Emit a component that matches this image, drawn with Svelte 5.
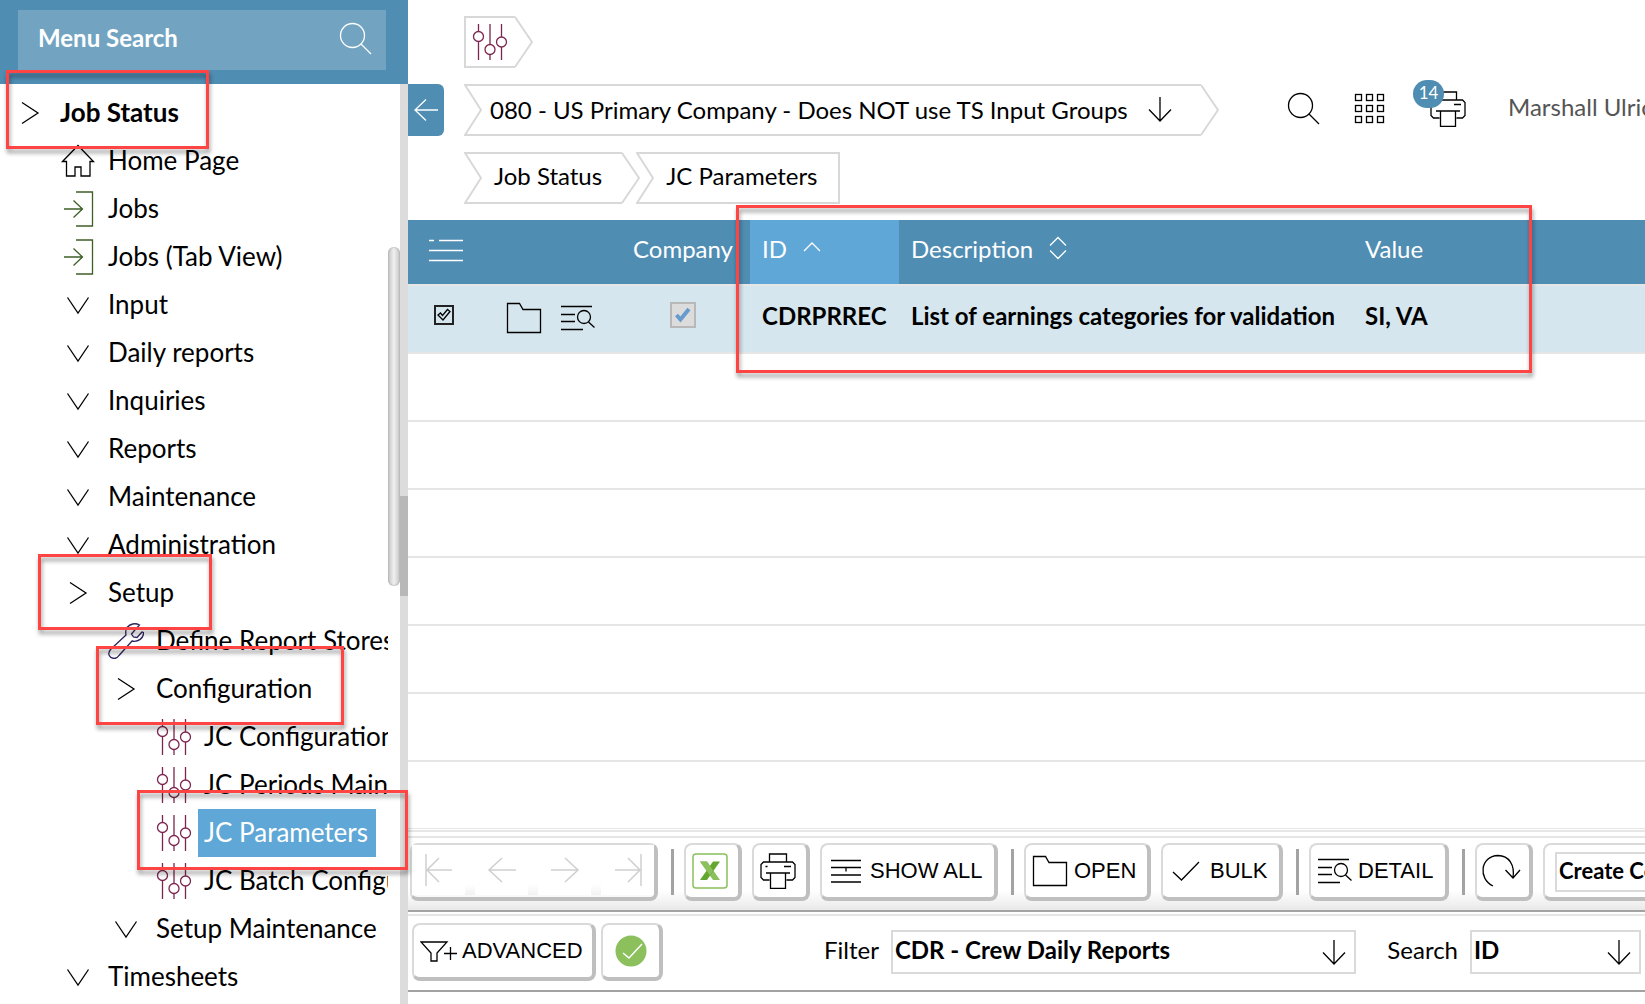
<script>
  const menu = [
    { label: 'Job Status', level: 0, icon: 'right', bold: true },
    { label: 'Home Page', level: 1, icon: 'home' },
    { label: 'Jobs', level: 1, icon: 'enter' },
    { label: 'Jobs (Tab View)', level: 1, icon: 'enter' },
    { label: 'Input', level: 1, icon: 'down' },
    { label: 'Daily reports', level: 1, icon: 'down' },
    { label: 'Inquiries', level: 1, icon: 'down' },
    { label: 'Reports', level: 1, icon: 'down' },
    { label: 'Maintenance', level: 1, icon: 'down' },
    { label: 'Administration', level: 1, icon: 'down' },
    { label: 'Setup', level: 1, icon: 'right' },
    { label: 'Define Report Stores', level: 2, icon: 'wrench' },
    { label: 'Configuration', level: 2, icon: 'right' },
    { label: 'JC Configuration', level: 3, icon: 'sliders' },
    { label: 'JC Periods Maintenance', level: 3, icon: 'sliders' },
    { label: 'JC Parameters', level: 3, icon: 'sliders', active: true },
    { label: 'JC Batch Configuration', level: 3, icon: 'sliders' },
    { label: 'Setup Maintenance', level: 2, icon: 'down' },
    { label: 'Timesheets', level: 1, icon: 'down' },
  ];
  const emptyRows = [1, 2, 3, 4, 5, 6, 7];
  const gridCells = [0, 1, 2, 3, 4, 5, 6, 7, 8];
</script>

{#snippet icon(name)}
  {#if name === 'right'}
    <svg class="ico" width="36" height="36" viewBox="0 0 36 36"><path d="M10 7.500L26 18L10 28.500" /></svg>
  {:else if name === 'down'}
    <svg class="ico" width="36" height="36" viewBox="0 0 36 36"><path d="M7.500 10.500L18 26L28.500 10.500" /></svg>
  {:else if name === 'home'}
    <svg class="ico" width="36" height="36" viewBox="0 0 36 36"><path d="M2.500 18.500L18 2.500L33.500 18.500H30V33H21V24H15V33H6.500V18.500Z" /></svg>
  {:else if name === 'enter'}
    <svg class="ico green" width="36" height="36" viewBox="0 0 36 36"><path d="M16 1H32.500V35H16M4 18H22.500M13.500 9.500L22.500 18L13.500 26.500" /></svg>
  {:else if name === 'wrench'}
    <svg class="ico indigo" width="36" height="36" viewBox="0 0 36 36"><path d="M31.500 2C27 -0.500 22 1 19 4.500C17.500 6.500 17.500 9 18 12L2.500 26.500C-1 31 1.500 35 6 35.500C8.500 35.500 10 34 11 32.500L24 18C30 19.500 36 15 35.500 9.500L34 9L29 14.500L25.500 14L23.500 11L26 8Z" /></svg>
  {:else if name === 'sliders'}
    <svg class="ico plum" width="36" height="36" viewBox="0 0 36 36"><path d="M6.500 0V7.500M6.500 17.500V36M18 0V20.500M18 30.500V36M29.500 0V13M29.500 23V36" /><circle cx="6.500" cy="12.500" r="5" /><circle cx="18" cy="25.500" r="5" /><circle cx="29.500" cy="18" r="5" /></svg>
  {:else if name === 'folder'}
    <svg class="ico" width="36" height="36" viewBox="0 0 36 36"><path d="M1.500 3.500H13.500L17 9.500H34.500V32.500H1.500Z" /></svg>
  {:else if name === 'detail'}
    <svg class="ico" width="36" height="36" viewBox="0 0 36 36"><path d="M1 6.500H32M1 14.500H15M1 21.500H15M1 29.500H23M28.500 22L34.500 27.500" /><circle cx="24" cy="17" r="6.500" /></svg>
  {:else if name === 'search'}
    <svg class="ico" width="36" height="36" viewBox="0 0 36 36"><circle cx="14.500" cy="14.500" r="12" /><path d="M23 23L33 33" /></svg>
  {:else if name === 'printer'}
    <svg class="ico" width="36" height="36" viewBox="0 0 36 36"><path d="M9.500 9V1H26.500V9M9.500 27H3.500L1 24.500V11.500L3.500 9H32.500L35 11.500V24.500L32.500 27H26.500M6 20H30M10.500 20V35.500H25.500V20M24 13.500H31M5.500 13.500H7.500" /></svg>
  {:else if name === 'arrow'}
    <svg class="ico" width="28" height="28" viewBox="0 0 28 28"><path d="M14 2V26M3 14.500L14 26L25 14.500" /></svg>
  {/if}
{/snippet}

{#snippet notch()}
  <svg class="cap" width="18" height="52" viewBox="0 0 18 52"><path d="M18 1H1L17 26L1 51H18" /></svg>
{/snippet}

{#snippet point()}
  <svg class="cap" width="18" height="52" viewBox="0 0 18 52"><path d="M0 1L17 26L0 51" /></svg>
{/snippet}

<div class="app">
  <aside class="side">
    <div class="side-head">
      <div class="menu-search">
        <input type="text" placeholder="Menu Search" aria-label="Menu Search" />
        <button aria-label="Search menu">{@render icon('search')}</button>
      </div>
    </div>
    <div class="side-body">
      <nav class="tree">
        <ul>
          {#each menu as item}
            <li class="level{item.level}">
              <span class="slot">{@render icon(item.icon)}</span>
              <a href="#menu" class:bold={item.bold} class:active={item.active}>{item.label}</a>
            </li>
          {/each}
        </ul>
      </nav>
      <div class="inner-bar"><span></span></div>
      <div class="outer-bar"><span></span></div>
    </div>
  </aside>

  <main class="main">
    <header class="top">
      <div class="crumbs">
        <div class="crumb home-crumb">
          <span class="crumb-body">{@render icon('sliders')}</span>
          {@render point()}
        </div>
      </div>
      <div class="company-row">
        <button class="collapse" aria-label="Collapse menu">
          <svg class="ico" width="28" height="28" viewBox="0 0 28 28"><path d="M26 14H3M14 3.500L3 14L14 24.500" /></svg>
        </button>
        <div class="crumb company">
          {@render notch()}
          <div class="crumb-body">
            <select aria-label="Company"><option>080 - US Primary Company - Does NOT use TS Input Groups</option></select>
            {@render icon('arrow')}
          </div>
          {@render point()}
        </div>
        <div class="tools">
          <button aria-label="Search">{@render icon('search')}</button>
          <button aria-label="Applications">
            <svg class="ico grid" width="32" height="32" viewBox="0 0 32 32">
              {#each gridCells as n}
                <rect x={1.5 + (n % 3) * 11} y={1.5 + Math.floor(n / 3) * 11} width="6" height="6" />
              {/each}
            </svg>
          </button>
          <button class="queue" aria-label="Print queue">{@render icon('printer')}<span class="badge">14</span></button>
          <span class="user">Marshall Ulrich</span>
        </div>
      </div>
      <div class="crumbs">
        <div class="crumb trail">
          {@render notch()}
          <a class="crumb-body" href="#status">Job Status</a>
          {@render point()}
        </div>
        <div class="crumb trail last">
          {@render notch()}
          <a class="crumb-body" href="#parameters">JC Parameters</a>
        </div>
      </div>
    </header>

    <table>
      <colgroup><col class="c-check" /><col class="c-act" /><col class="c-comp" /><col class="c-id" /><col class="c-desc" /><col /></colgroup>
      <thead>
        <tr>
          <th class="mid"><button class="columns" aria-label="Columns"><svg class="ico" width="34" height="24" viewBox="0 0 34 24"><path d="M0 1.500H5M10 1.500H34M0 11.500H34M0 21.500H34" /></svg></button></th>
          <th></th>
          <th class="mid">Company</th>
          <th class="sorted"><button>ID <svg class="ico" width="18" height="24" viewBox="0 0 18 24"><path d="M1 15L9 7L17 15" /></svg></button></th>
          <th><button>Description <svg class="ico" width="18" height="24" viewBox="0 0 18 24"><path d="M1 9.500L9 1.500L17 9.500M1 14.500L9 22.500L17 14.500" /></svg></button></th>
          <th>Value</th>
        </tr>
      </thead>
      <tbody>
        <tr class="chosen">
          <td class="mid"><label class="pick"><input type="checkbox" checked aria-label="Select row" /><svg class="ico" width="14" height="14" viewBox="0 0 14 14"><path d="M1 7L3.500 5L5.500 7.500L10.500 1.500L13 3.500L6 12Z" /></svg></label></td>
          <td><div class="acts"><button aria-label="Open record">{@render icon('folder')}</button><button aria-label="Record detail">{@render icon('detail')}</button></div></td>
          <td class="mid"><label class="flag"><input type="checkbox" checked disabled aria-label="Company level" /><svg width="16" height="16" viewBox="0 0 16 16"><path d="M1.500 8L5.500 12.500L14 2" /></svg></label></td>
          <td>CDRPRREC</td>
          <td>List of earnings categories for validation</td>
          <td>SI, VA</td>
        </tr>
        {#each emptyRows as row}
          <tr class="empty"><td colspan="6"></td></tr>
        {/each}
      </tbody>
    </table>

    <div class="bar actions">
      <div class="btn pager">
        <button aria-label="First"><svg width="30" height="34" viewBox="0 0 30 34"><path d="M2 1V33M28 17H3M15 5L3 17L15 29" /></svg></button>
        <button aria-label="Previous"><svg width="30" height="34" viewBox="0 0 30 34"><path d="M29 17H2M15 5L2 17L15 29" /></svg></button>
        <button aria-label="Next"><svg width="30" height="34" viewBox="0 0 30 34"><path d="M1 17H28M15 5L28 17L15 29" /></svg></button>
        <button aria-label="Last"><svg width="30" height="34" viewBox="0 0 30 34"><path d="M28 1V33M2 17H27M15 5L27 17L15 29" /></svg></button>
      </div>
      <i class="rule"></i>
      <button class="btn square" aria-label="Export to Excel">
        <svg width="36" height="36" viewBox="0 0 36 36"><rect x="1" y="1" width="34" height="34" rx="3" fill="none" stroke="#8bc05c" stroke-width="1.500" /><path d="M8 8.500H15L28 27H21Z" fill="#8bc05c" /><path d="M21 8.500H28L15 27H8Z" fill="#62a830" /><path d="M8 8.500H15L21 17.500L18 22.500Z" fill="#8bc05c" /></svg>
      </button>
      <button class="btn square" aria-label="Print">{@render icon('printer')}</button>
      <button class="btn show"><svg class="ico" width="32" height="28" viewBox="0 0 32 28"><path d="M1 3.500H31M1 10.500H31M1 18H31M1 25H31M16 11V14.500" /></svg>SHOW ALL</button>
      <i class="rule"></i>
      <button class="btn open">{@render icon('folder')}OPEN</button>
      <button class="btn bulk"><svg class="ico" width="28" height="24" viewBox="0 0 28 24"><path d="M1 13L9.500 21L27 3" /></svg>BULK</button>
      <i class="rule"></i>
      <button class="btn more">{@render icon('detail')}DETAIL</button>
      <i class="rule"></i>
      <button class="btn square" aria-label="Refresh"><svg class="ico" width="40" height="36" viewBox="0 0 40 36"><path d="M12 33C-3 26 -1 3 17 2.500C28 2.500 34 12 32 25M24.500 17L32 25L39 17" /></svg></button>
      <div class="btn create"><select aria-label="Action"><option>Create Copy</option></select></div>
    </div>

    <div class="bar filters">
      <button class="btn advanced"><svg class="ico" width="38" height="24" viewBox="0 0 38 24"><path d="M1 3H27L17 14V22H11V14ZM24 14.500H37M30.500 8V21" /></svg>ADVANCED</button>
      <button class="btn apply" aria-label="Apply"><svg width="32" height="32" viewBox="0 0 32 32"><circle cx="16" cy="16" r="15.500" fill="#8bc05c" /><path d="M8 18L14 23L27 9" fill="none" stroke="#fff" stroke-width="1.500" /></svg></button>
      <label class="field filter"><span>Filter</span><span class="box"><select><option>CDR - Crew Daily Reports</option></select>{@render icon('arrow')}</span></label>
      <label class="field find"><span>Search</span><span class="box"><select><option>ID</option></select>{@render icon('arrow')}</span></label>
    </div>
  </main>

  <div class="mark mark-status"></div>
  <div class="mark mark-setup"></div>
  <div class="mark mark-config"></div>
  <div class="mark mark-params"></div>
  <div class="mark mark-record"></div>
</div>

<style>
  :global(body) { background: #fff; overflow: hidden; }
  .app {
    position: relative;
    display: grid;
    grid-template-columns: 408px minmax(0, 1fr);
    min-height: 100vh;
    overflow: hidden;
    font-family: Lato, "Liberation Sans", sans-serif;
    font-size: 24px;
    color: #000;
  }
  .app * { box-sizing: border-box; }
  button, select, input { font: inherit; color: inherit; }
  button { border: 0; padding: 0; background: none; }
  select { appearance: none; border: 0; padding: 0; background: none; }
  a { color: inherit; text-decoration: none; }
  svg { display: block; flex: none; }
  .ico { fill: none; stroke: currentColor; stroke-width: 1.3; }
  .green { color: #3f5f26; }
  .indigo { color: #2f2560; }
  .plum { color: #7d2550; }

  .side { display: flex; flex-direction: column; height: 100vh; }
  .side-head { padding: 10px 22px 14px 18px; background: #4f8db3; }
  .menu-search { display: flex; align-items: center; height: 60px; padding: 0 12px 2px 20px; background: #72a4c2; color: #fff; }
  .menu-search input { flex: 1; min-width: 0; height: 52px; padding: 0 0 4px; border: 0; background: none; font-weight: 700; }
  .menu-search input::placeholder { color: #fff; opacity: 1; }
  .side-body { flex: 1; min-height: 0; display: grid; grid-template-columns: 388px 12px 8px; }
  .tree { overflow: hidden; padding-top: 5px; }
  ul { margin: 0; padding: 0; list-style: none; }
  li { display: flex; align-items: center; height: 48px; padding-left: 6px; font-size: 26px; white-space: nowrap; }
  .level1 { padding-left: 54px; }
  .level2 { padding-left: 102px; }
  .level3 { padding-left: 150px; }
  .slot { flex: none; display: grid; place-items: center; width: 48px; }
  li a { height: 48px; padding: 0 6px; line-height: 46px; }
  .bold { font-weight: 700; }
  .active { padding-right: 8px; background: #5fa7d6; color: #fff; }
  .inner-bar { padding-top: 163px; }
  .inner-bar span { display: block; height: 339px; border-radius: 6px; background: linear-gradient(90deg, #c4c4c4, #f0f0f0 50%, #c4c4c4); box-shadow: inset 0 0 2px #999; }
  .outer-bar { padding-top: 412px; background: #dcdcdc; }
  .outer-bar span { display: block; height: 100px; background: #b8b8b8; }

  .main { min-width: 0; overflow: hidden; }
  .top { display: grid; gap: 16px; padding: 16px 0; }
  .crumbs { display: flex; padding-left: 56px; }
  .crumb { display: flex; height: 52px; white-space: nowrap; }
  .crumb-body { display: flex; align-items: center; border: solid #d8d8d8; border-width: 2px 0; }
  .cap { fill: none; stroke: #d8d8d8; stroke-width: 2; }
  .home-crumb .crumb-body { padding: 0 7px 0 6px; border-left-width: 2px; }
  .trail .crumb-body { padding: 0 20px 6px 12px; }
  .last { margin-left: -4px; }
  .last .crumb-body { border-right-width: 2px; }
  .company-row { display: flex; align-items: center; height: 52px; }
  .collapse { flex: none; display: grid; place-items: center; width: 36px; height: 52px; margin-right: 20px; border-radius: 0 6px 6px 0; background: #4f8db3; color: #fff; }
  .company .crumb-body { gap: 15px; padding: 0 27px 2px 8px; }
  .tools { display: flex; align-items: center; gap: 32px; margin-left: 67px; padding-bottom: 2px; }
  .queue { position: relative; margin-left: 12px; }
  .badge { position: absolute; left: -17px; top: -11px; width: 31px; height: 28px; border-radius: 14px; background: #4f8db3; color: #fff; font-size: 17px; line-height: 26px; text-align: center; }
  .user { padding: 0 0 6px 10px; color: #555; white-space: nowrap; }

  table { width: 100%; table-layout: fixed; border-collapse: separate; border-spacing: 0; }
  .c-check { width: 72px; }
  .c-act { width: 136px; }
  .c-comp { width: 134px; }
  .c-id { width: 149px; }
  .c-desc { width: 454px; }
  th { height: 64px; padding: 0 12px 8px; background: #4f8db3; color: #fff; font-weight: 400; text-align: left; }
  th button { display: flex; align-items: center; gap: 16px; }
  th.sorted { background: #5fa7d6; }
  th.mid, td.mid { padding-left: 0; padding-right: 0; text-align: center; }
  th.mid .columns { margin: 6px auto 0 21px; }
  td { height: 68px; padding: 0 12px; border-bottom: 2px solid #e6e6e6; font-weight: 700; white-space: nowrap; }
  .chosen td { height: 70px; padding-bottom: 8px; border-top: 2px solid #e6e6e6; background: #d5e6ee; }
  .empty:last-child td { height: 67px; border-bottom-width: 1px; }
  .acts { display: flex; gap: 18px; padding: 6px 0 0 14px; }
  .pick, .flag { position: relative; display: grid; place-items: center; margin: 0 auto; }
  .pick { width: 20px; height: 20px; }
  .flag { width: 26px; height: 26px; }
  .pick svg, .flag svg { position: absolute; }
  .pick input, .flag input { appearance: none; width: 100%; height: 100%; margin: 0; border: 2px solid #222; }
  .flag input { border-color: #b8b8b8; background: #dcdcdc; }
  .flag path { fill: none; stroke: #669bd0; stroke-width: 4; }

  .bar { display: flex; align-items: center; border-bottom: 2px solid #a3a3a3; }
  .actions { height: 82px; gap: 10px; margin-top: 1px; padding: 1px 0 0 2px; border-top: 2px solid #e6e6e6; background: linear-gradient(#e6e6e6 0 2px, #fff 2px 70%, #e4e4e4) 0 4px no-repeat; }
  .btn { flex: none; display: flex; align-items: center; height: 58px; border: 2px solid #dadada; border-right: 4px solid #bfbfbf; border-bottom: 4px solid #bfbfbf; border-radius: 8px; background: #fff; font-family: "Liberation Sans", sans-serif; font-size: 22px; white-space: nowrap; }
  .square { justify-content: center; width: 58px; padding-right: 4px; }
  .pager { gap: 10px; width: 248px; padding-bottom: 2px; background: linear-gradient(#fff 75%, #f0f0f0); background-clip: content-box; }
  .pager button { flex: 1; display: grid; place-items: center; height: 50px; background: #fff; }
  .pager path { fill: none; stroke: #cfcfcf; stroke-width: 1.500; }
  .rule { flex: none; width: 3px; height: 46px; margin-left: 3px; background: #a3a3a3; }
  .show { gap: 8px; width: 178px; padding-left: 8px; }
  .open { gap: 6px; width: 127px; padding-left: 6px; }
  .bulk { gap: 10px; width: 122px; padding-left: 9px; }
  .more { gap: 5px; width: 140px; padding-left: 6px; }
  .create { padding: 2px 10px 0; font-family: inherit; }
  .create select { width: 180px; height: 40px; padding: 0 2px 2px; border: 2px solid #dadada; font-size: 22px; font-weight: 700; }
  .filters { height: 80px; gap: 5px; padding: 0 4px; border-top: 2px solid #fff; background: linear-gradient(#e6e6e6, #e6e6e6) 0 0 / 100% 2px no-repeat; }
  .advanced { gap: 4px; width: 184px; padding-left: 6px; }
  .apply { justify-content: center; width: 62px; }
  .field { display: flex; align-items: center; gap: 12px; }
  .field > span:first-child { padding-bottom: 6px; }
  .filter { flex: 1; margin-left: 156px; }
  .find { margin-left: 26px; }
  .box { display: flex; align-items: center; height: 44px; padding-right: 6px; border: 2px solid #dadada; }
  .filter .box { flex: 1; }
  .find .box { width: 171px; }
  .box select { flex: 1; min-width: 0; padding: 0 0 6px 2px; font-weight: 700; }

  .mark { position: absolute; border: 3px solid #ff4444; pointer-events: none; filter: drop-shadow(1px 4px 2px rgba(0, 0, 0, 0.4)); }
  .mark-status { left: 6px; top: 70px; width: 203px; height: 79px; }
  .mark-setup { left: 38px; top: 554px; width: 174px; height: 76px; }
  .mark-config { left: 96px; top: 646px; width: 248px; height: 79px; }
  .mark-params { left: 137px; top: 790px; width: 271px; height: 80px; }
  .mark-record { left: 736px; top: 205px; width: 796px; height: 168px; }
</style>
